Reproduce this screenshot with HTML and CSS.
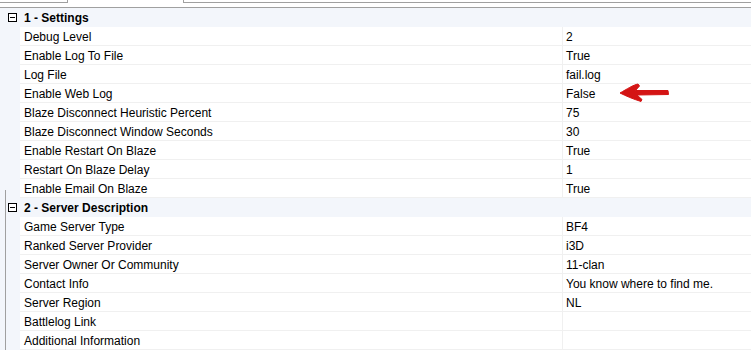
FILE: index.html
```html
<!DOCTYPE html>
<html>
<head>
<meta charset="utf-8">
<link rel="stylesheet" href="styles.css">
</head>
<body>
<div class="topstrip">
  <div class="tbox tbox-left"></div>
  <div class="tgap"></div>
  <div class="tbox tbox-right"></div>
</div>
<div class="grid">
  <div class="cat"><span class="toggle"></span><span class="cat-label">1 - Settings</span></div>
  <div class="row"><div class="gutter"></div><div class="name">Debug Level</div><div class="value">2</div></div>
  <div class="row"><div class="gutter"></div><div class="name">Enable Log To File</div><div class="value">True</div></div>
  <div class="row"><div class="gutter"></div><div class="name">Log File</div><div class="value">fail.log</div></div>
  <div class="row"><div class="gutter"></div><div class="name">Enable Web Log</div><div class="value">False</div></div>
  <div class="row"><div class="gutter"></div><div class="name">Blaze Disconnect Heuristic Percent</div><div class="value">75</div></div>
  <div class="row"><div class="gutter"></div><div class="name">Blaze Disconnect Window Seconds</div><div class="value">30</div></div>
  <div class="row"><div class="gutter"></div><div class="name">Enable Restart On Blaze</div><div class="value">True</div></div>
  <div class="row"><div class="gutter"></div><div class="name">Restart On Blaze Delay</div><div class="value">1</div></div>
  <div class="row"><div class="gutter"></div><div class="name">Enable Email On Blaze</div><div class="value">True</div></div>
  <div class="cat"><span class="toggle"></span><span class="cat-label">2 - Server Description</span></div>
  <div class="row"><div class="gutter"></div><div class="name">Game Server Type</div><div class="value">BF4</div></div>
  <div class="row"><div class="gutter"></div><div class="name">Ranked Server Provider</div><div class="value">i3D</div></div>
  <div class="row"><div class="gutter"></div><div class="name">Server Owner Or Community</div><div class="value">11-clan</div></div>
  <div class="row"><div class="gutter"></div><div class="name">Contact Info</div><div class="value">You know where to find me.</div></div>
  <div class="row"><div class="gutter"></div><div class="name">Server Region</div><div class="value">NL</div></div>
  <div class="row"><div class="gutter"></div><div class="name">Battlelog Link</div><div class="value"></div></div>
  <div class="row"><div class="gutter"></div><div class="name">Additional Information</div><div class="value"></div></div>
</div>
<div class="edge-line"></div>
<svg class="arrow" width="60" height="26" viewBox="0 0 60 26">
  <path d="M5 13 C 12 9, 18 5, 23 4 L 24.5 6 L 20.5 10.5 L 53 10.5 L 53.5 14.5 L 22 15 L 27 19.5 L 26 21.5 C 18 19, 11 16, 5 13 Z" fill="#d41414" stroke="#d41414" stroke-width="1" stroke-linejoin="round"/>
</svg>
</body>
</html>
```

FILE: styles.css
```css
html, body {
  margin: 0;
  padding: 0;
  background: #ffffff;
}
body {
  font-family: "Liberation Sans", Arial, sans-serif;
  font-size: 12px;
  color: #000;
  width: 751px;
  height: 350px;
  overflow: hidden;
  position: relative;
}
.topstrip {
  display: flex;
  height: 8px;
  border-bottom: 1px solid #a0a0a0;
  box-sizing: border-box;
}
.tbox {
  height: 3px;
  border-bottom: 1px solid #a0a0a0;
  box-sizing: border-box;
}
.tbox-left {
  width: 68px;
  border-right: 1px solid #a0a0a0;
}
.tgap {
  width: 115px;
}
.tbox-right {
  flex: 1;
  border-left: 1px solid #a0a0a0;
}
.grid {
  display: flex;
  flex-direction: column;
}
.cat {
  display: flex;
  align-items: center;
  height: 19px;
  background: #f3f6fb;
  font-weight: bold;
}
.cat-label {
  line-height: 19px;
  padding-top: 2px;
}
.toggle {
  width: 9px;
  height: 9px;
  box-sizing: border-box;
  border: 1px solid #000;
  margin-left: 8px;
  margin-right: 7px;
  position: relative;
  background: #fff;
}
.toggle::after {
  content: "";
  position: absolute;
  left: 1px;
  right: 1px;
  top: 3px;
  height: 1px;
  background: #000;
}
.row {
  display: flex;
  height: 19px;
}
.gutter {
  width: 20px;
  background: #f3f6fb;
}
.name {
  width: 543px;
  box-sizing: border-box;
  padding-left: 4px;
  padding-top: 1px;
  border-bottom: 1px solid #f0f0f0;
  border-right: 1px solid #f0f0f0;
  line-height: 18px;
  white-space: nowrap;
  overflow: hidden;
}
.value {
  flex: 1;
  box-sizing: border-box;
  padding-left: 3px;
  padding-top: 1px;
  border-bottom: 1px solid #f0f0f0;
  line-height: 18px;
  white-space: nowrap;
  overflow: hidden;
}
.edge-line {
  position: absolute;
  left: 5px;
  top: 190px;
  width: 1px;
  height: 160px;
  background: #a0a0a0;
}
.arrow {
  position: absolute;
  left: 615px;
  top: 80px;
}
```
